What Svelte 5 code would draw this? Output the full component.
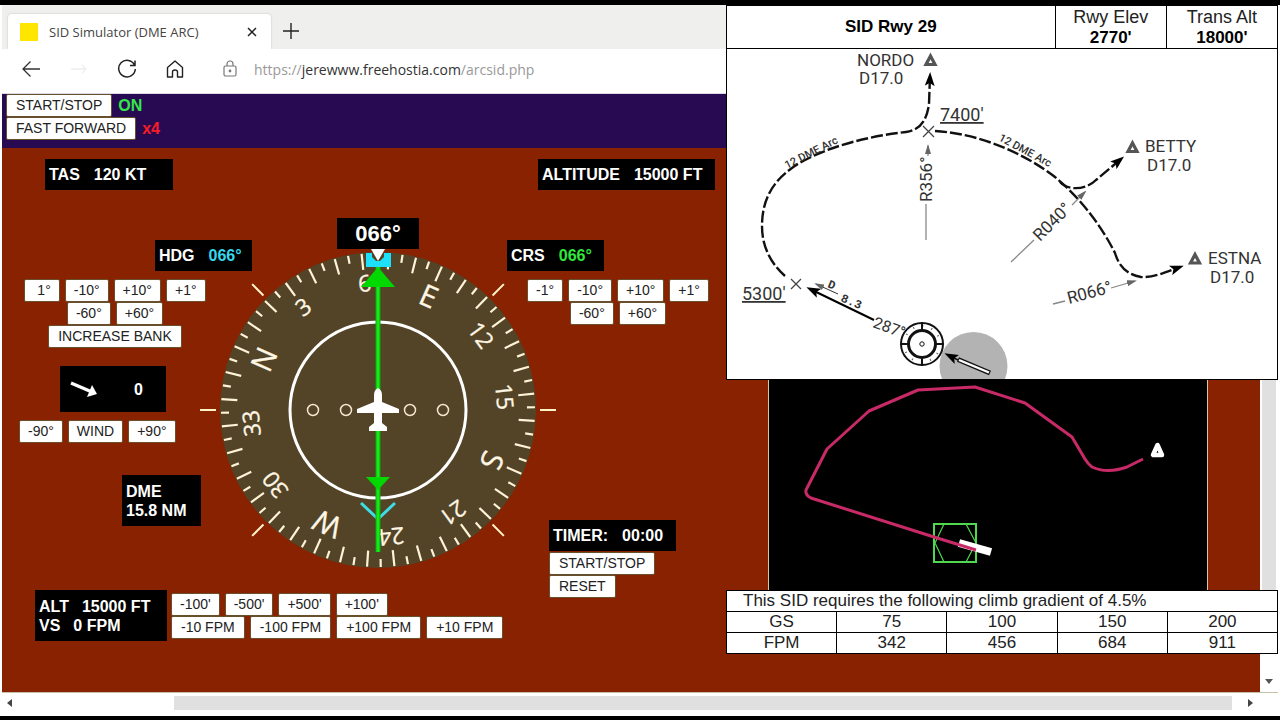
<script>
  let running = true;
  let speed = 4;
  let heading = 66;
  let course = 66;

  const pad = (n) => String(n).padStart(3, '0') + '°';

  // compass card: a tick each 5 degrees, a label each 30
  const ticks = Array.from({ length: 72 }, (_, i) => i * 5);
  const labels = ['N', '3', '6', 'E', '12', '15', 'S', '21', '24', 'W', '30', '33'];
  const dots = [-65, -32, 32, 65];
  const marks = [45, 90, 135, 225, 270, 315];

  const steps = [
    [' 1°', '-10°', '+10°', '+1°'],
    ['-60°', '+60°']
  ];
  const courseSteps = [
    ['-1°', '-10°', '+10°', '+1°'],
    ['-60°', '+60°']
  ];
  const altSteps = [
    ["-100'", "-500'", "+500'", "+100'"],
    ['-10 FPM', '-100 FPM', '+100 FPM', '+10 FPM']
  ];

  const gradient = [
    ['GS', 75, 100, 150, 200],
    ['FPM', 342, 456, 684, 911]
  ];
</script>

<div class="screen">
  <div class="columns">
    <div class="left">
      <header class="tabs">
        <div class="tab">
          <span class="favicon"></span>
          <span class="title">SID Simulator (DME ARC)</span>
          <button class="icon" aria-label="Close tab">
            <svg width="10" height="10" viewBox="0 0 10 10"><path d="M1 1L9 9M9 1L1 9" stroke="#222" stroke-width="1.5" /></svg>
          </button>
        </div>
        <button class="icon" aria-label="New tab">
          <svg width="16" height="16" viewBox="0 0 16 16"><path d="M8 0V16M0 8H16" stroke="#222" stroke-width="1.4" /></svg>
        </button>
      </header>

      <nav class="toolbar">
        <button class="icon" aria-label="Back">
          <svg width="20" height="20" viewBox="0 0 20 20" fill="none" stroke="#333" stroke-width="1.3"><path d="M19 10H2M9.500 2.500L2 10L9.500 17.500" /></svg>
        </button>
        <button class="icon" aria-label="Forward">
          <svg width="20" height="20" viewBox="0 0 20 20" fill="none" stroke="#eee" stroke-width="1.3"><path d="M2 10H17M13 6L17 10L13 14" /></svg>
        </button>
        <button class="icon" aria-label="Refresh">
          <svg width="20" height="20" viewBox="0 0 20 20" fill="none" stroke="#222" stroke-width="1.5"><path d="M17.500 6A8.300 8.300 0 1 0 18.300 10M18 1.500V6.500H13" /></svg>
        </button>
        <button class="icon" aria-label="Home">
          <svg width="20" height="20" viewBox="0 0 20 20" fill="none" stroke="#222" stroke-width="1.4" stroke-linejoin="round"><path d="M2.500 8.500L10 2L17.500 8.500V18H12.500V13Q12.500 11 10 11T7.500 13V18H2.500Z" /></svg>
        </button>
        <div class="address">
          <svg width="16" height="20" viewBox="0 0 16 20" fill="none" stroke="#777" stroke-width="1.2"><rect x="2" y="7" width="12" height="10" rx="1.500" /><path d="M5 7V5A3 3 0 0 1 11 5V7" /><circle cx="8" cy="12" r=".8" fill="#777" /></svg>
          <a href="https://jerewww.freehostia.com/arcsid.php">https://<b>jerewww.freehostia.com</b>/arcsid.php</a>
        </div>
      </nav>

      <div class="sim">
        <div><button class="key wide">START/STOP</button><strong class="on">{running ? 'ON' : 'OFF'}</strong></div>
        <div><button class="key wide">FAST FORWARD</button><strong class="fast">x{speed}</strong></div>
      </div>

      <main class="cockpit">
        <section class="port">
          <div class="readout tas"><span>TAS</span><span>120 KT</span></div>
          <div class="readout hdg"><span>HDG</span><span class="cyan">{pad(heading)}</span></div>
          <div class="keys">
            {#each steps as row}
              <div class="row">
                {#each row as label}<button class="key">{label}</button>{/each}
              </div>
            {/each}
            <button class="key wide">INCREASE BANK</button>
          </div>
          <div class="readout wind">
            <svg width="28" height="18" viewBox="0 0 28 18"><path d="M1 3L22 12" stroke="#fff" stroke-width="3.400" /><path d="M27 14L17 17L22 5Z" fill="#fff" /></svg>
            <span>0</span>
          </div>
          <div class="row windkeys">
            <button class="key">-90°</button><button class="key">WIND</button><button class="key">+90°</button>
          </div>
          <div class="readout dme"><span>DME</span><span>15.8 NM</span></div>
        </section>

        <section class="hsi">
          <div class="heading">{pad(heading)}</div>
          <svg width="356" height="321" viewBox="-178 -161 356 321">
            <circle r="158" fill="#534428" />
            <g stroke="#fff3d8" stroke-width="2.200" transform="rotate({-heading})">
              {#each ticks as t}
                <line y1="-157" y2={t % 10 ? -149 : -141} transform="rotate({t})" />
              {/each}
            </g>
            <g class="card" transform="rotate({-heading})">
              {#each labels as label, i}
                <text class:cardinal={i % 3 == 0} y={i % 3 == 0 ? -114 : -119} transform="rotate({i * 30})">{label}</text>
              {/each}
            </g>
            <g stroke="#fff3c8" stroke-width="2">
              {#each marks as m}
                <line y1="-162" y2="-178" transform="rotate({m})" />
              {/each}
            </g>
            <circle r="88" fill="none" stroke="#fff" stroke-width="3" />
            {#each dots as x}
              <circle cx={x} r="5.500" fill="none" stroke="#f5e6cc" stroke-width="1.500" />
            {/each}
            <path d="M-12 -157H13V-143H-12Z" fill="#1fe0fa" />
            <path d="M-6 -157H6V-153L2 -149H-2L-6 -153Z" fill="#534428" />
            <path d="M-7 -161H7L0 -149Z" fill="#fff" />
            <path d="M-17 93L0 109L17 93" fill="none" stroke="#3fdce4" stroke-width="3" />
            <g transform="rotate({course - heading})">
              <path d="M0 -143V142" stroke="#0ba80b" stroke-width="5" />
              <path d="M0 -143V142" stroke="#18e818" stroke-width="3" />
              <path d="M0 -143L17 -123H-17Z M-12 67H12L0 80Z" fill="#00d800" />
            </g>
            <path d="M0 -22Q4 -20 4 -15V-8L21 -1V3H4V13L9 17V21H-9V17L-4 13V3H-21V-1L-4 -8V-15Q-4 -20 0 -22Z" fill="#fff" />
          </svg>
        </section>

        <section class="starboard">
          <div class="readout alt"><span>ALTITUDE</span><span>15000 FT</span></div>
          <div class="readout crs"><span>CRS</span><span class="green">{pad(course)}</span></div>
          <div class="keys">
            {#each courseSteps as row}
              <div class="row">
                {#each row as label}<button class="key">{label}</button>{/each}
              </div>
            {/each}
          </div>
          <div class="timer">
            <div class="readout"><span>TIMER:</span><span>00:00</span></div>
            <button class="key wide">START/STOP</button>
            <button class="key wide">RESET</button>
          </div>
        </section>

        <section class="vertical">
          <div class="readout">
            <p><span>ALT</span><span>15000 FT</span></p>
            <p><span>VS</span><span>0 FPM</span></p>
          </div>
          <div>
            {#each altSteps as row}
              <div class="row">
                {#each row as label}<button class="key" class:wide={label.length > 6}>{label}</button>{/each}
              </div>
            {/each}
          </div>
        </section>
      </main>
    </div>

    <div class="right">
      <section class="chart">
        <table class="head">
          <tbody>
            <tr>
              <th class="name">SID Rwy 29</th>
              <td>Rwy Elev<br /><b>2770'</b></td>
              <td>Trans Alt<br /><b>18000'</b></td>
            </tr>
          </tbody>
        </table>
        <svg class="plan" viewBox="727 49 550 330">
          <defs>
            <marker id="tip" viewBox="0 0 14 10" refX="10" refY="5" markerWidth="14" markerHeight="10" markerUnits="userSpaceOnUse" orient="auto">
              <path d="M14 5L0 0L3 5L0 10Z" />
            </marker>
            <marker id="smalltip" viewBox="0 0 10 6" refX="8" refY="3" markerWidth="10" markerHeight="6" markerUnits="userSpaceOnUse" orient="auto">
              <path d="M10 3L0 0V6Z" fill="#666" />
            </marker>
          </defs>

          <circle cx="973.500" cy="366" r="34" fill="#b3b3b3" />

          <g class="route">
            <path d="M785 276C768 261 762 243 762 226C762 195 777 177 798 164C828 146 870 136 906 132C921 130 927 119 929 104L930 76" marker-end="url(#tip)" />
            <path d="M935 131C985 134 1029 157 1055 177C1084 201 1104 231 1115 253C1118 263 1124 274 1141 277C1153 278 1166 272 1180 267" marker-end="url(#tip)" />
            <path d="M1060 182C1068 191 1086 190 1096 180L1121 159" marker-end="url(#tip)" />
          </g>
          <path d="M874 320L810 289" stroke="#000" stroke-width="2" marker-end="url(#tip)" />
          <path d="M838 294L816 284" stroke="#333" stroke-width="1" marker-end="url(#smalltip)" />

          <g class="radial">
            <path d="M926 240V204" /><path d="M928 156V146" marker-end="url(#smalltip)" />
            <path d="M1011 262L1034 240" /><path d="M1072 205L1085 192" marker-end="url(#smalltip)" />
            <path d="M1053 304L1065 301" /><path d="M1111 288L1135 281" marker-end="url(#smalltip)" />
          </g>

          <path d="M923 126L934 137M934 126L923 137M791 279L801 289M801 279L791 289" stroke="#444" stroke-width="1.300" />

          <g fill="#fff" stroke="#555" stroke-width="3.200">
            <path d="M930.500 56L935 64.500H926Z" />
            <path d="M1132.500 143L1137 151.500H1128Z" />
            <path d="M1195 254.500L1199.500 263H1190.500Z" />
          </g>

          <circle cx="922" cy="344" r="21" fill="#fff" stroke="#111" stroke-width="2" />
          <circle cx="922" cy="344" r="18" fill="none" stroke="#555" stroke-width="2" stroke-dasharray="1 8.400" />
          <circle cx="922" cy="344" r="13.500" fill="none" stroke="#111" stroke-width="3" />
          <circle cx="922" cy="344" r="2.200" fill="none" stroke="#111" />
          <path d="M922 322V330M922 358V366M900 344H908M936 344H944" stroke="#111" stroke-width="2" />
          <path d="M958 360L948 355" stroke="#111" stroke-width="1.500" marker-end="url(#tip)" />
          <path d="M958 359.500L990 373" stroke="#111" stroke-width="5" />
          <path d="M959 360L989 372.500" stroke="#fff" stroke-width="2.400" />

          <text x="857" y="66">NORDO</text>
          <text x="859" y="84">D17.0</text>
          <text x="1145" y="152">BETTY</text>
          <text x="1147" y="171">D17.0</text>
          <text x="1208" y="264">ESTNA</text>
          <text x="1210" y="283">D17.0</text>
          <text x="940" y="121" class="limit">7400'</text>
          <text x="742" y="300" class="limit">5300'</text>
          <text transform="translate(932 202) rotate(-90)">R356°</text>
          <text transform="translate(1040 242) rotate(-45)">R040°</text>
          <text transform="translate(1069 304) rotate(-15)">R066°</text>
          <text transform="translate(872 327) rotate(20)" class="track">287°</text>
          <g class="tiny">
            <text transform="translate(787 169) rotate(-27)">12 DME Arc</text>
            <text transform="translate(998 140) rotate(28)">12 DME Arc</text>
            <text class="mono" transform="translate(827 287) rotate(22)">D</text>
            <text class="mono" transform="translate(840 301) rotate(22)">8.3</text>
          </g>
        </svg>
      </section>

      <div class="below">
        <svg class="map" viewBox="769 380 438 210" preserveAspectRatio="xMidYMid slice">
          <g fill="none" stroke="#50d850">
            <rect x="934" y="524" width="42" height="38" stroke-width="2" />
            <path d="M935 543L944 524M966 524L976 543L966 562M944 562L935 543" stroke-width="1.200" />
          </g>
          <path d="M959 543L991 552" stroke="#fff" stroke-width="8" />
          <path d="M1143 459L1127 467Q1107 474 1092 467Q1088 464 1085 459L1072 437L1025 403L975 387L918 390L869 411L827 449L806 490Q805 495 811 498L934 537L976 550" fill="none" stroke="#c82a68" stroke-width="3" stroke-linejoin="round" />
          <path d="M1157.500 445L1153 455H1162Z" fill="#000" stroke="#fff" stroke-width="4.500" stroke-linejoin="round" />
        </svg>
        <div class="vscroll"></div>
      </div>

      <table class="climb">
        <tbody>
          <tr><td colspan="5" class="note">This SID requires the following climb gradient of 4.5%</td></tr>
          {#each gradient as row}
            <tr>
              {#each row as cell}<td>{cell}</td>{/each}
            </tr>
          {/each}
        </tbody>
      </table>

      <div class="foot">
        <div class="vscroll end"><svg width="8" height="5" viewBox="0 0 8 5"><path d="M0 0H8L4 5Z" fill="#555" /></svg></div>
      </div>
    </div>
  </div>

  <div class="hscroll">
    <svg width="5" height="8" viewBox="0 0 5 8"><path d="M5 0V8L0 4Z" fill="#444" /></svg>
    <div class="thumb"></div>
    <svg width="5" height="8" viewBox="0 0 5 8"><path d="M0 0V8L5 4Z" fill="#444" /></svg>
  </div>
</div>

<style>
  :global(body) {
    margin: 0;
    background: #000;
  }

  .screen {
    box-sizing: border-box;
    min-height: 100vh;
    display: flex;
    flex-direction: column;
    padding: 0 2px;
    border: solid #000;
    border-width: 5px 0 4px;
    background: #fff;
    font-family: "Liberation Sans", Arial, sans-serif;
  }
  .columns {
    flex: 1;
    display: grid;
    grid-template-columns: 724fr 552fr;
  }
  .left, .right {
    display: flex;
    flex-direction: column;
    min-width: 0;
  }

  .icon {
    display: flex;
    padding: 0;
    border: 0;
    background: none;
  }

  .tabs {
    display: flex;
    align-items: center;
    gap: 12px;
    height: 44px;
    padding-left: 6px;
    background: #eff0ee;
  }
  .tab {
    display: flex;
    align-items: center;
    align-self: flex-end;
    box-sizing: border-box;
    width: 263px;
    height: 35px;
    padding: 0 14px 0 12px;
    border-radius: 4px 4px 0 0;
    background: #fff;
    box-shadow: 0 0 2px #bbb;
  }
  .tabs > .icon {
    margin-top: 8px;
  }
  .favicon {
    width: 18px;
    height: 18px;
    margin-right: 11px;
    background: #ffe600;
  }
  .title {
    flex: 1;
    color: #444;
    font: 13px "Open Sans", sans-serif;
  }

  .toolbar {
    display: flex;
    align-items: center;
    gap: 28px;
    box-sizing: border-box;
    height: 45px;
    padding: 0 0 4px 19px;
    border-bottom: 1px solid #ddd8e4;
    background: #fff;
  }
  .address {
    display: flex;
    align-items: center;
    gap: 16px;
    margin-left: 9px;
    font: 14px "Open Sans", sans-serif;
  }
  .address a {
    color: #999;
    text-decoration: none;
  }
  .address b {
    color: #333;
    font-weight: 400;
  }

  .sim {
    height: 54px;
    padding-left: 4px;
    background: #280a52;
  }
  .sim div {
    display: flex;
    align-items: center;
    gap: 6px;
  }
  .sim strong {
    font-size: 16px;
    line-height: 20px;
  }
  .on { color: #34e648; }
  .fast { color: #f81c28; }

  .key {
    box-sizing: border-box;
    height: 23px;
    padding: 0 8px 1px;
    border: 1px solid #68502c;
    border-radius: 2px;
    background: #fff;
    color: #222;
    font: 14px/20px "Liberation Sans", Arial, sans-serif;
    white-space: pre;
  }
  .wide {
    padding: 0 9px 1px;
  }
  .row {
    display: flex;
    gap: 5px;
  }
  .readout {
    display: flex;
    align-items: center;
    gap: 14px;
    box-sizing: border-box;
    height: 31px;
    padding: 0 4px;
    background: #000;
    color: #fff;
    font-size: 16px;
    font-weight: 700;
    line-height: 19px;
    white-space: nowrap;
  }
  .cyan { color: #35d8ec; }
  .green { color: #30e83c; }

  .cockpit {
    flex: 1;
    display: grid;
    grid-template-columns: 198px 307px 49px 1fr;
    grid-template-rows: auto 1fr;
    background: #882200;
  }
  .port {
    grid-area: 1 / 1 / 2 / 3;
    z-index: 1;
    justify-self: start;
    padding-top: 11px;
  }
  .hsi {
    grid-area: 1 / 2 / 2 / 4;
    display: flex;
    flex-direction: column;
    align-items: center;
    padding-top: 70px;
  }
  .starboard {
    grid-area: 1 / 3 / 3 / 5;
    padding-top: 11px;
  }
  .vertical {
    grid-area: 2 / 1 / 3 / 3;
    display: flex;
    align-items: center;
    align-self: start;
    gap: 4px;
    padding: 20px 0 0 33px;
  }

  .keys {
    display: flex;
    flex-direction: column;
    align-items: center;
    width: 226px;
    margin-top: 8px;
  }
  .starboard .keys {
    width: 222px;
  }
  .tas {
    width: 128px;
    margin-left: 43px;
  }
  .hdg, .crs {
    width: 97px;
    margin-top: 50px;
  }
  .hdg {
    margin-left: 153px;
  }
  .wind {
    justify-content: space-between;
    width: 106px;
    height: 46px;
    margin: 18px 0 8px 58px;
    padding: 0 23px 0 10px;
  }
  .windkeys {
    margin-left: 17px;
  }
  .dme {
    flex-direction: column;
    align-items: flex-start;
    justify-content: center;
    gap: 0;
    width: 79px;
    height: 51px;
    margin: 32px 0 0 120px;
  }

  .heading {
    width: 82px;
    background: #000;
    color: #fff;
    font-size: 22px;
    font-weight: 700;
    line-height: 31px;
    text-align: center;
  }
  .card {
    fill: #fff6e4;
    stroke: #fff6e4;
    stroke-width: .3px;
    font: 23px "Open Sans", sans-serif;
    text-anchor: middle;
  }
  .cardinal {
    font-size: 30px;
  }

  .alt {
    width: 177px;
    margin-left: 31px;
  }
  .timer {
    display: flex;
    flex-direction: column;
    align-items: flex-start;
    margin: 195px 0 0 42px;
  }
  .timer .readout {
    width: 127px;
    margin-bottom: 1px;
  }
  .vertical .readout {
    flex-direction: column;
    align-items: flex-start;
    justify-content: center;
    gap: 0;
    width: 132px;
    height: 51px;
  }
  .vertical p {
    display: flex;
    gap: 13px;
    margin: 0;
  }

  table {
    border-collapse: collapse;
    table-layout: fixed;
    width: 100%;
    background: #fff;
    color: #222;
  }
  th, td {
    padding: 0;
    border: 1px solid #000;
    text-align: center;
  }
  .chart {
    border-bottom: 1px solid #000;
    background: #fff;
  }
  .head {
    height: 44px;
    font-size: 18px;
    line-height: 20px;
  }
  .head td {
    width: 20%;
  }
  .head .name, .head b {
    color: #000;
    font-size: 17px;
  }
  .plan {
    display: block;
    box-sizing: border-box;
    width: 100%;
    border: solid #000;
    border-width: 0 1px;
  }
  .plan text {
    fill: #333;
    font: 17px Roboto, sans-serif;
  }
  .plan .limit {
    font-size: 18px;
    text-decoration: underline;
  }
  .plan .track {
    font-size: 16px;
  }
  .plan .tiny text {
    font-size: 11px;
    font-weight: 500;
  }
  .plan .tiny .mono {
    font: bold 12px "Liberation Mono", monospace;
  }
  .route {
    fill: none;
    stroke: #111;
    stroke-width: 2.4px;
    stroke-dasharray: 12 3;
  }
  .radial {
    fill: none;
    stroke: #888;
    stroke-width: 1.3px;
  }

  .below {
    flex: 1;
    display: flex;
    padding-left: 42px;
    background: #882200;
  }
  .map {
    flex: 1;
    min-width: 0;
    height: 100%;
    min-height: 209px;
    margin-right: 52px;
    border: solid #d8c8a8;
    border-width: 0 1px;
    background: #000;
  }
  .vscroll {
    box-sizing: border-box;
    width: 18px;
    border: solid #fff;
    border-width: 0 2px;
    background: #e0e0e0;
  }
  .climb {
    font-size: 17px;
    line-height: 20px;
  }
  .climb .note {
    padding-left: 16px;
    text-align: left;
  }
  .foot {
    display: flex;
    justify-content: flex-end;
    height: 38px;
    background: #882200;
  }
  .end {
    display: flex;
    align-items: flex-end;
    justify-content: center;
    padding-bottom: 8px;
    background: #fff;
  }

  .hscroll {
    display: flex;
    align-items: center;
    box-sizing: border-box;
    height: 24px;
    padding: 0 25px 4px 5px;
    border-top: 1px solid #c8c0a8;
    background: #fff;
  }
  .thumb {
    flex: 1;
    height: 14px;
    margin: 0 16px 0 162px;
    background: #e0e0e0;
  }
</style>
